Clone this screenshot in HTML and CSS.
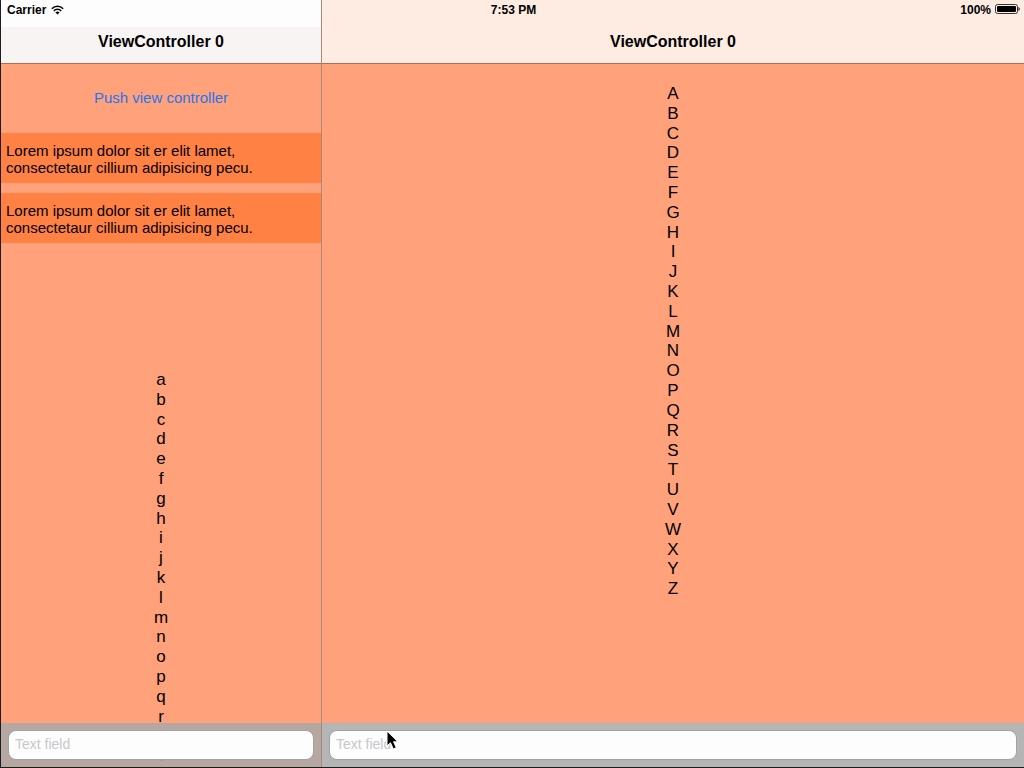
FILE: index.html
```
<!DOCTYPE html>
<html lang="en">
<head>
<meta charset="utf-8">
<title>ViewController 0</title>
<link rel="stylesheet" href="styles.css">
</head>
<body>
<div class="screen">
  <div class="status">
    <span class="carrier">Carrier
      <svg class="wifi" width="13" height="10" viewBox="0 0 13 10" aria-hidden="true"><path d="M.8 3.7a8 8 0 0 1 11.4 0M2.8 5.9a5.2 5.2 0 0 1 7.4 0" fill="none" stroke="#000" stroke-width="1.5"/><path d="M6.500 9.600 4.400 7.500a3 3 0 0 1 4.200 0z"/></svg>
    </span>
    <span class="time">7:53 PM</span>
    <span class="power">100%
      <svg class="battery" width="25" height="10" viewBox="0 0 25 10" aria-hidden="true"><rect x=".5" y=".5" width="22" height="9" rx="2" fill="none" stroke="#333"/><rect x="2" y="2" width="19" height="6" rx="1"/><path d="M23.5 3q1.2.4 1.2 2t-1.2 2z"/></svg>
    </span>
  </div>
  <section class="pane master">
    <header class="nav"><h1 class="title">ViewController 0</h1></header>
    <main class="content">
      <button class="push" type="button">Push view controller</button>
      <p class="note">Lorem ipsum dolor sit er elit lamet,<br>consectetaur cillium adipisicing pecu.</p>
      <p class="note">Lorem ipsum dolor sit er elit lamet,<br>consectetaur cillium adipisicing pecu.</p>
      <ul class="letters lower"><li>a</li><li>b</li><li>c</li><li>d</li><li>e</li><li>f</li><li>g</li><li>h</li><li>i</li><li>j</li><li>k</li><li>l</li><li>m</li><li>n</li><li>o</li><li>p</li><li>q</li><li>r</li><li>s</li><li>t</li></ul>
    </main>
    <footer class="toolbar"><input class="field" type="text" placeholder="Text field" aria-label="Text field"></footer>
  </section>
  <section class="pane detail">
    <header class="nav"><h1 class="title">ViewController 0</h1></header>
    <main class="content">
      <ul class="letters upper"><li>A</li><li>B</li><li>C</li><li>D</li><li>E</li><li>F</li><li>G</li><li>H</li><li>I</li><li>J</li><li>K</li><li>L</li><li>M</li><li>N</li><li>O</li><li>P</li><li>Q</li><li>R</li><li>S</li><li>T</li><li>U</li><li>V</li><li>W</li><li>X</li><li>Y</li><li>Z</li></ul>
    </main>
    <footer class="toolbar"><input class="field" type="text" placeholder="Text field" aria-label="Text field">
      <svg class="pointer" width="16" height="22" viewBox="0 0 16 22" aria-hidden="true"><path d="M1 1v15l3.500-3.200 2.800 6.200 3-1.400-2.700-5.800H12z" stroke="#fff" stroke-width="1"/></svg>
    </footer>
  </section>
</div>
</body>
</html>
```
FILE: styles.css
```
* { box-sizing: border-box; }
body {
  margin: 0;
  font-family: "Liberation Sans", Arial, sans-serif;
  color: #000;
}
.screen {
  position: relative;
  display: grid;
  grid-template-columns: 321px 1fr;
  height: 100vh;
  overflow: hidden;
  background: #ffa17a;
  border-left: 1px solid #1c1c24;
  border-bottom: 1px solid #1c1c1c;
}
.status {
  position: absolute;
  inset: 0 0 auto;
  z-index: 2;
  display: grid;
  grid-template-columns: 1fr auto 1fr;
  align-items: center;
  height: 20px;
  padding: 0 4px 0 6px;
  font-size: 12px;
  font-weight: bold;
}
.carrier, .power { display: flex; align-items: center; gap: 5px; }
.power { justify-content: flex-end; gap: 4px; }
.battery { margin-bottom: 2px; }
.pane {
  display: flex;
  flex-direction: column;
  min-width: 0;
  min-height: 0;
}
.master { border-right: 1px solid #a88878; }
.nav {
  flex: none;
  height: 64px;
  padding-top: 20px;
  border-bottom: 1px solid #a8705a;
  background: #feebe1;
}
.master .nav { background: linear-gradient(#fdfdfd 27px, #f8f4f3 27px); }
.title {
  margin: 0;
  font-size: 16px;
  line-height: 43px;
  text-align: center;
}
.content {
  display: flex;
  flex: 1;
  flex-direction: column;
  min-height: 0;
}
.push {
  align-self: center;
  flex: none;
  margin: 19px 0 20px;
  padding: 0;
  border: 0;
  background: none;
  color: #1f76ee;
  font: 15px/30px "Liberation Sans", Arial, sans-serif;
}
.note {
  flex: none;
  margin: 0 0 10px;
  padding: 9px 5px 7px;
  background: #ff8144;
  font-size: 15px;
  line-height: 17px;
}
.letters {
  display: grid;
  flex: none;
  grid-auto-rows: 1fr;
  margin: 0;
  padding: 0;
  list-style: none;
  font-size: 17px;
  line-height: 19px;
  text-align: center;
}
.lower { height: 396px; margin-top: 117px; }
.upper { height: 515px; margin-top: 20px; }
.toolbar {
  position: relative;
  z-index: 1;
  flex: none;
  display: flex;
  height: 44px;
  padding: 7px;
  background: #b5b5b5;
}
.master .toolbar { background: rgba(176, 168, 166, .93); }
.field {
  flex: 1;
  min-width: 0;
  padding: 0 6px 2px;
  border: 1px solid #a2a2a2;
  border-radius: 8px;
  background: #fdfdfd;
  font: 14px "Liberation Sans", Arial, sans-serif;
}
.field::placeholder { color: #c7c7cc; opacity: 1; }
.pointer {
  position: absolute;
  left: 64px;
  top: 7px;
}
```
